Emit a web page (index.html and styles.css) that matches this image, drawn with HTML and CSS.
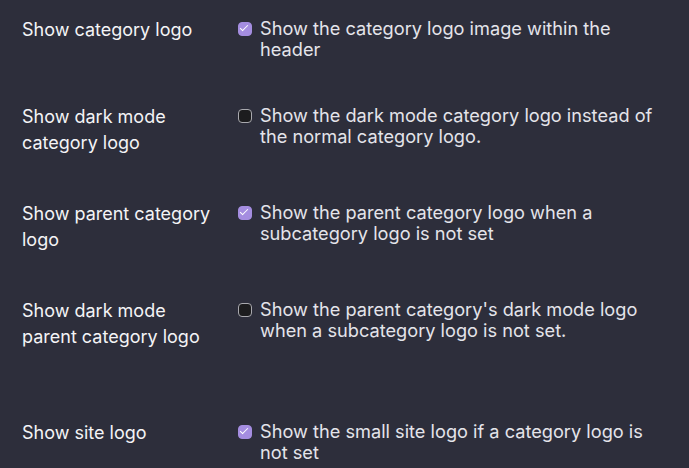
FILE: index.html
```html
<!DOCTYPE html>
<html lang="en">
<head>
    <meta charset="UTF-8">
    <title>Category logo settings</title>
    <link rel="stylesheet" href="styles.css">
</head>
<body>
    <div class="settings">
        <div class="setting setting-compact">
            <div class="setting-label">Show category logo</div>
            <label class="setting-value">
                <input type="checkbox" checked>
                <span>Show the category logo image within the header</span>
            </label>
        </div>

        <div class="setting">
            <div class="setting-label">Show dark mode category logo</div>
            <label class="setting-value">
                <input type="checkbox">
                <span>Show the dark mode category logo instead of the normal category logo.</span>
            </label>
        </div>

        <div class="setting">
            <div class="setting-label">Show parent category logo</div>
            <label class="setting-value">
                <input type="checkbox" checked>
                <span>Show the parent category logo when a subcategory logo is not set</span>
            </label>
        </div>

        <div class="setting">
            <div class="setting-label">Show dark mode parent category logo</div>
            <label class="setting-value">
                <input type="checkbox">
                <span>Show the parent category's dark mode logo when a subcategory logo is not set.</span>
            </label>
        </div>

        <div class="setting setting-spaced">
            <div class="setting-label">Show site logo</div>
            <label class="setting-value">
                <input type="checkbox" checked>
                <span>Show the small site logo if a category logo is not set</span>
            </label>
        </div>
    </div>
</body>
</html>
```

FILE: styles.css
```css
body {
    margin: 0;
    background-color: #2d2e3b;
    font-family: Inter, "Noto Sans", sans-serif;
    color: #f4f4f6;
}

.settings {
    display: flex;
    flex-direction: column;
    padding: 17px 0 0 22px;
}

.setting {
    display: flex;
    align-items: flex-start;
    min-height: 97px;
}

.setting-compact {
    min-height: 87px;
}

.setting-spaced {
    margin-top: 25px;
    min-height: 0;
}

.setting-label {
    width: 200px;
    margin-right: 16px;
    flex-shrink: 0;
    font-size: 18px;
    line-height: 26px;
}

.setting-value {
    display: flex;
    align-items: flex-start;
    width: 430px;
    font-size: 18.2px;
    line-height: 21px;
    padding-top: 1px;
    color: #e4e4ea;
}

.setting-value input {
    appearance: none;
    width: 14px;
    height: 14px;
    margin: 4px 8px 0 0;
    flex-shrink: 0;
    border-radius: 4px;
    border: 1.5px solid #a9a9ae;
    background-color: #1c1c1e;
    position: relative;
}

.setting-value input:checked {
    border-color: #a48de0;
    background-color: #a48de0;
}

/* vinkje */
.setting-value input:checked::after {
    content: "";
    position: absolute;
    left: 3px;
    top: 0px;
    width: 3px;
    height: 7px;
    border: solid #ffffff;
    border-width: 0 1.5px 1.5px 0;
    transform: rotate(45deg);
}
```
